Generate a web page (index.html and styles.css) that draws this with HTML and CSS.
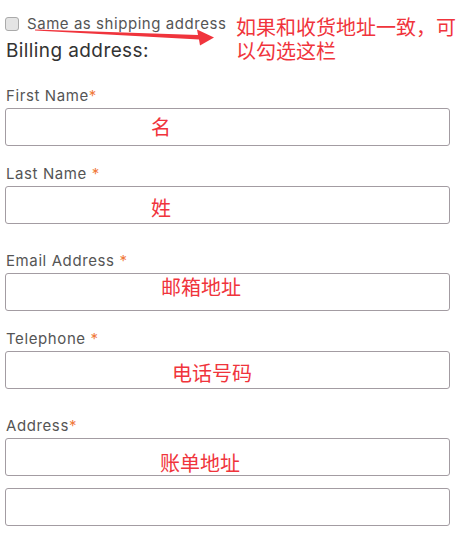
FILE: index.html
```html
<!DOCTYPE html>
<html lang="zh-CN">
<head>
  <meta charset="UTF-8">
  <meta name="viewport" content="width=device-width, initial-scale=1.0">
  <title>Billing address</title>
  <link rel="stylesheet" href="styles.css">
</head>
<body>
  <div class="page">
    <label class="same-row">
      <input type="checkbox" class="same-check">
      <span>Same as shipping address</span>
    </label>
    <h2 class="section-title">Billing address:</h2>

    <div class="group">
      <label class="field-label">First Name<span class="req">*</span></label>
      <div class="field"><span class="note note-first">名</span></div>
    </div>
    <div class="group group-end">
      <label class="field-label">Last Name <span class="req">*</span></label>
      <div class="field"><span class="note note-last">姓</span></div>
    </div>

    <div class="group">
      <label class="field-label">Email Address <span class="req">*</span></label>
      <div class="field"><span class="note note-email">邮箱地址</span></div>
    </div>
    <div class="group group-end">
      <label class="field-label">Telephone <span class="req">*</span></label>
      <div class="field"><span class="note note-phone">电话号码</span></div>
    </div>

    <div class="group">
      <label class="field-label">Address<span class="req">*</span></label>
      <div class="field"><span class="note note-address">账单地址</span></div>
      <div class="field field-extra"></div>
    </div>

    <!-- 批注 -->
    <div class="callout">如果和收货地址一致，可以勾选这栏</div>
    <svg class="arrow" width="458" height="60" viewBox="0 0 458 60">
      <polygon points="35,29.5 198,35 197,29.5 214,37.5 200,45.5 199,39.5 35,30.5" fill="#f0343c"/>
    </svg>
  </div>
</body>
</html>
```

FILE: styles.css
```css
body {
  margin: 0;
  background: #fff;
  font-family: Inter, "Noto Sans", sans-serif;
  color: #555;
}
.page {
  position: relative;
  width: 445px;
  padding: 13px 0 0 5px;
}
.same-row {
  display: flex;
  align-items: center;
  height: 20px;
  font-size: 15px;
  letter-spacing: 0.55px;
  color: #555;
}
.same-check {
  appearance: none;
  -webkit-appearance: none;
  width: 14px;
  height: 14px;
  margin: 1px 8px 0 0;
  border: 1px solid #aaa;
  border-radius: 3px;
  background: #e4e4e4;
}
.section-title {
  margin: 6px 0 23px 1px;
  font-size: 19px;
  font-weight: normal;
  letter-spacing: 0.4px;
  line-height: 24px;
  color: #333;
}
.group {
  margin-bottom: 18px;
}
.group-end {
  margin-bottom: 27px;
}
.field-label {
  display: block;
  margin: 0 0 2px 1px;
  font-size: 15px;
  letter-spacing: 0.6px;
  line-height: 20px;
  color: #555;
}
.req {
  color: #f07a3c;
}
.field {
  display: flex;
  align-items: center;
  height: 36px;
  border: 1px solid #a39ca2;
  border-radius: 3px;
}
.field-extra {
  margin-top: 12px;
}
.note {
  font-family: "Noto Sans CJK SC", sans-serif;
  font-size: 20px;
  color: #f0343c;
}
.note-first { margin: 0 0 2px 145px; }
.note-last { margin: 4px 0 0 145px; }
.note-email { margin: 0 0 11px 155px; }
.note-phone { margin: 5px 0 0 166px; }
.note-address { margin: 10px 0 0 154px; }
.callout {
  position: absolute;
  left: 236px;
  top: 15px;
  width: 221px;
  font-family: "Noto Sans CJK SC", sans-serif;
  font-size: 20px;
  line-height: 24px;
  color: #f0343c;
}
.arrow {
  position: absolute;
  left: 0;
  top: 0;
}
```
